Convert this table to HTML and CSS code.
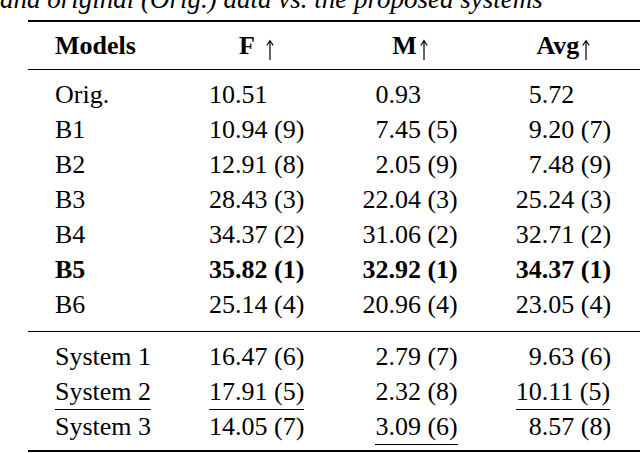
FILE: index.html
```html
<!DOCTYPE html>
<html>
<head>
    <title>Results table</title>
    <link rel="stylesheet" href="styles.css">
</head>
<body>
    <p class="caption">and original (Orig.) data vs. the proposed systems</p>

    <table class="results">
        <thead>
            <tr>
                <th class="name">Models</th>
                <th>F <svg class="arrow wide" viewBox="0 0 8 21"><path d="M4 1.5V21M0.8 6.5L4 1.5L7.2 6.5"/></svg></th>
                <th>M<svg class="arrow" viewBox="0 0 8 21"><path d="M4 1.5V21M0.8 6.5L4 1.5L7.2 6.5"/></svg></th>
                <th>Avg<svg class="arrow" viewBox="0 0 8 21"><path d="M4 1.5V21M0.8 6.5L4 1.5L7.2 6.5"/></svg></th>
            </tr>
        </thead>
        <tbody class="base">
            <tr><td>Orig.</td><td>10.51</td><td><span class="ph">0</span>0.93</td><td><span class="ph">0</span>5.72</td></tr>
            <tr><td>B1</td><td>10.94 (9)</td><td><span class="ph">0</span>7.45 (5)</td><td><span class="ph">0</span>9.20 (7)</td></tr>
            <tr><td>B2</td><td>12.91 (8)</td><td><span class="ph">0</span>2.05 (9)</td><td><span class="ph">0</span>7.48 (9)</td></tr>
            <tr><td>B3</td><td>28.43 (3)</td><td>22.04 (3)</td><td>25.24 (3)</td></tr>
            <tr><td>B4</td><td>34.37 (2)</td><td>31.06 (2)</td><td>32.71 (2)</td></tr>
            <tr class="best"><td>B5</td><td>35.82 (1)</td><td>32.92 (1)</td><td>34.37 (1)</td></tr>
            <tr><td>B6</td><td>25.14 (4)</td><td>20.96 (4)</td><td>23.05 (4)</td></tr>
        </tbody>
        <tbody class="sys">
            <tr><td>System 1</td><td>16.47 (6)</td><td><span class="ph">0</span>2.79 (7)</td><td><span class="ph">0</span>9.63 (6)</td></tr>
            <tr><td><span class="ul">System 2</span></td><td><span class="ul">17.91 (5)</span></td><td><span class="ph">0</span>2.32 (8)</td><td><span class="ul">10.11 (5)</span></td></tr>
            <tr><td>System 3</td><td>14.05 (7)</td><td><span class="ph">0</span><span class="ul">3.09 (6)</span></td><td><span class="ph">0</span>8.57 (8)</td></tr>
        </tbody>
    </table>
</body>
</html>
```

FILE: styles.css
```css
body {
    margin: 0;
    background: #fff;
    color: #000;
    font-family: "Liberation Serif", "Times New Roman", serif;
    font-size: 26px;
    overflow: hidden;
}

.caption {
    margin: -14px 0 8px 0;
    padding-left: 0;
    font-size: 27px;
    font-style: italic;
    line-height: 26px;
    white-space: nowrap;
}

.results {
    margin-left: 28px;
    width: 612px;
    border-collapse: separate;
    border-spacing: 0;
    line-height: 35px;
    white-space: nowrap;
}

.results th,
.results td {
    padding: 0 29px;
    text-align: left;
    vertical-align: baseline;
}

.results th { text-align: center; font-weight: bold; }
.results th.name { text-align: left; }
.results tr > :first-child { padding-left: 27px; }

.results thead th {
    border-top: 2px solid #000;
    border-bottom: 1px solid #000;
    padding-top: 6px;
    padding-bottom: 6px;
}

.arrow {
    width: 8px;
    height: 21px;
    margin-left: 3px;
    vertical-align: -6px;
    fill: none;
    stroke: #000;
    stroke-width: 1.2;
}

.arrow.wide { margin-left: 6px; }

.base tr:first-child td { padding-top: 7px; }
.base tr:last-child td { padding-bottom: 9px; border-bottom: 1px solid #000; }

.sys tr:first-child td { padding-top: 7px; }
.sys tr:last-child td { padding-bottom: 6px; border-bottom: 2px solid #000; }

.best td { font-weight: bold; }

.ph { visibility: hidden; }

.ul {
    border-bottom: 1px solid #000;
    padding-bottom: 3px;
}
```
